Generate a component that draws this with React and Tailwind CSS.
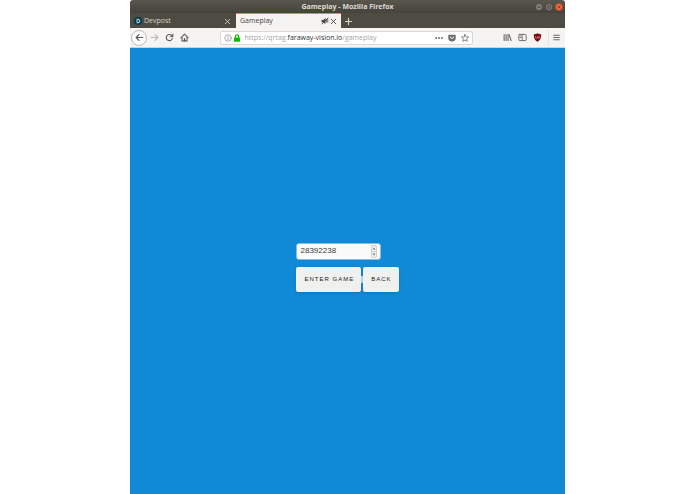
import React, { useState } from "react";

const Icon = ({ className = "h-[9px] w-[9px]", children }) => (
  <svg
    viewBox="0 0 16 16"
    className={className}
    fill="none"
    stroke="currentColor"
    strokeWidth="2"
    strokeLinecap="round"
    strokeLinejoin="round"
    aria-hidden="true"
  >
    {children}
  </svg>
);

const CloseIcon = () => (
  <Icon className="h-[7px] w-[7px]">
    <path d="M3 3l10 10M13 3L3 13" />
  </Icon>
);

const TitleBar = () => (
  <header className="relative flex h-[13px] items-center justify-end gap-[2px] rounded-t-[3px] bg-linear-to-b from-[#59564e] to-[#45433d] pr-[2px]">
    <h1 className="absolute inset-x-0 text-center font-['Open_Sans','Noto_Sans',sans-serif] text-[7px] leading-[13px] font-bold text-[#dfdbd2]">
      Gameplay - Mozilla Firefox
    </h1>
    <button aria-label="Minimize" className="relative text-[#84817a]">
      <svg viewBox="0 0 16 16" className="h-[8px] w-[8px]">
        <circle cx="8" cy="8" r="7" fill="currentColor" stroke="#3a3833" />
        <path d="M5 8h6" stroke="#3a3833" strokeWidth="2" />
      </svg>
    </button>
    <button aria-label="Maximize" className="relative text-[#84817a]">
      <svg viewBox="0 0 16 16" className="h-[8px] w-[8px]">
        <circle cx="8" cy="8" r="7" fill="currentColor" stroke="#3a3833" />
        <path d="M5.5 5.5h5v5h-5z" fill="none" stroke="#3a3833" strokeWidth="1.5" />
      </svg>
    </button>
    <button aria-label="Close" className="relative text-[#ee6436]">
      <svg viewBox="0 0 16 16" className="h-[8px] w-[8px]">
        <circle cx="8" cy="8" r="7.5" fill="currentColor" stroke="#6b3a26" strokeWidth="0.6" />
        <path d="M5.5 5.5l5 5M10.5 5.5l-5 5" stroke="#8a3a1e" strokeWidth="1.6" />
      </svg>
    </button>
  </header>
);

const TabBar = () => (
  <nav className="flex h-[15px] items-stretch bg-[#4e4b43] text-[7px] text-[#d8d4cc]">
    <div className="flex w-[106px] items-center border-t border-transparent pr-[5px] pl-1">
      <svg viewBox="0 0 16 16" className="mr-[2px] h-[8px] w-[8px]" aria-hidden="true">
        <circle cx="8" cy="8" r="8" fill="#003e54" />
        <path d="M6 4.5h2a3.5 3.5 0 0 1 0 7H6z" fill="none" stroke="#d9edf5" strokeWidth="1.8" />
      </svg>
      <a href="#devpost" className="flex-1">
        Devpost
      </a>
      <button aria-label="Close Devpost">
        <CloseIcon />
      </button>
    </div>
    <div className="flex w-[105px] items-center border-t border-[#dd8468] bg-[#f5f3f2] pr-1 pl-1 text-[#45433e]">
      <a href="#gameplay" className="flex-1">
        Gameplay
      </a>
      <button aria-label="Unmute tab" className="mr-px">
        <Icon className="h-[8px] w-[8px]">
          <path d="M2 6.5h2.5L8.500 3v10L4.500 10H2z" fill="currentColor" strokeWidth="1" />
          <path d="M11 6v4M13.5 4.5v6" strokeWidth="1.5" />
          <path d="M2 14L14 2" strokeWidth="1.8" />
        </Icon>
      </button>
      <button aria-label="Close Gameplay">
        <CloseIcon />
      </button>
    </div>
    <button aria-label="New tab" className="border-t border-transparent px-[3px]">
      <Icon>
        <path d="M8 2.5v11M2.5 8h11" />
      </Icon>
    </button>
  </nav>
);

const Toolbar = () => (
  <div className="flex h-5 items-center border-b border-[#cfd2d4] bg-[#f5f4f2] text-[#5b5b5b]">
    <div className="flex flex-1 items-center gap-[6px] pl-px">
      <button
        aria-label="Back"
        className="grid h-4 w-4 place-items-center rounded-full border border-[#bdbbb9] bg-[#fcfcfc]"
      >
        <Icon>
          <path d="M14 8H2.5M7 3L2 8l5 5" />
        </Icon>
      </button>
      <div className="-ml-[3px] flex items-center gap-[6px]">
        <button aria-label="Forward" className="text-[#b9b8b7]">
          <Icon>
            <path d="M2 8h11.500M9 3l5 5-5 5" />
          </Icon>
        </button>
        <button aria-label="Reload">
          <Icon>
            <path d="M13 10a5.500 5.500 0 1 1-1.500-6" />
            <path d="M14.500 1.500v5.500H9z" fill="currentColor" strokeWidth="0.5" />
          </Icon>
        </button>
        <button aria-label="Home">
          <Icon>
            <path d="M1.500 8.500L8 2l6.500 6.500M3.500 8v6h9V8" strokeWidth="1.800" />
            <path d="M8 14v-4" strokeWidth="2.500" />
          </Icon>
        </button>
      </div>
    </div>

    <div className="flex h-[14px] w-[253px] items-center rounded-[2px] border border-[#dad9d8] bg-white px-[3px]">
      <button aria-label="Site information" className="text-[#858585]">
        <Icon className="h-[8px] w-[8px]">
          <circle cx="8" cy="8" r="6.5" strokeWidth="1.3" />
          <path d="M8 7.5v4M8 4.5v.2" strokeWidth="1.6" />
        </Icon>
      </button>
      <svg viewBox="0 0 16 16" className="ml-px h-[8px] w-[8px]" aria-hidden="true">
        <rect x="2" y="7" width="12" height="8.5" rx="1" fill="#12bc00" />
        <path d="M4.8 8V5a3.200 3.200 0 0 1 6.400 0v3" fill="none" stroke="#12bc00" strokeWidth="2.2" />
      </svg>
      <a
        href="#gameplay"
        className="ml-1 flex-1 text-[7px] leading-3 text-[#a5a5a5]"
      >
        https://qrtag.<span className="text-[#333333]">faraway-vision.io</span>/gameplay
      </a>
      <div className="flex items-center gap-[5px] text-[#6d6d6d]">
        <button aria-label="Page actions">
          <svg viewBox="0 0 16 16" className="h-[8px] w-[8px]" fill="currentColor">
            <circle cx="2.2" cy="8" r="2" />
            <circle cx="8" cy="8" r="2" />
            <circle cx="13.8" cy="8" r="2" />
          </svg>
        </button>
        <button aria-label="Save to Pocket">
          <svg viewBox="0 0 16 16" className="h-[8px] w-[8px]">
            <path d="M2 1.500h12a1.500 1.500 0 0 1 1.500 1.500v4.500a7.500 7.500 0 0 1-15 0V3A1.500 1.500 0 0 1 2 1.500z" fill="currentColor" />
            <path d="M4.500 6L8 9.300 11.500 6" fill="none" stroke="white" strokeWidth="2" strokeLinecap="round" />
          </svg>
        </button>
        <button aria-label="Bookmark this page">
          <Icon className="h-[8px] w-[8px]">
            <path d="M8 1l2.100 4.600 4.900.6-3.600 3.400 1 5L8 12.100l-4.400 2.500 1-5L1 6.200l4.900-.6z" strokeWidth="1.700" />
          </Icon>
        </button>
      </div>
    </div>

    <div className="flex flex-1 items-center justify-end gap-[6px] pr-1">
      <button aria-label="Library">
        <Icon>
          <path d="M2 2.500v11M5.500 2.500v11M9 2.500v11M11 3l3.500 10.500" strokeWidth="1.800" />
        </Icon>
      </button>
      <button aria-label="Sidebars">
        <Icon>
          <rect x="1.5" y="2.5" width="13" height="11" rx="1.5" strokeWidth="1.5" />
          <path d="M7.500 3v10M3.500 5.500h2M3.500 8h2" strokeWidth="1.3" />
        </Icon>
      </button>
      <button aria-label="uBlock Origin">
        <svg viewBox="0 0 16 16" className="h-[9px] w-[9px]">
          <path d="M8 .5c2 1.300 4 1.800 6.500 1.800 0 6-.5 9.700-6.500 13.200C2 12 1.500 8.300 1.500 2.300 4 2.300 6 1.800 8 .5z" fill="#800610" />
          <path d="M4.500 6v2a1.500 1.500 0 0 0 3 0V6" fill="none" stroke="#e8b9bc" strokeWidth="1" />
          <circle cx="10.300" cy="7.800" r="1.600" fill="none" stroke="#e8b9bc" strokeWidth="1" />
        </svg>
      </button>
      <div className="flex items-center gap-[3px] border-l border-[#e4e3e1] py-[3px] pl-[3px]">
        <button aria-label="Open menu">
          <Icon>
            <path d="M3 4h10M3 8h10M3 12h10" strokeWidth="1.6" />
          </Icon>
        </button>
      </div>
    </div>
  </div>
);

const GameForm = () => {
  const [code, setCode] = useState("28392238");
  const step = (n) => setCode(String(Number(code) + n));

  return (
    <form
      onSubmit={(e) => e.preventDefault()}
      className="font-['Liberation_Sans',Arial,sans-serif]"
    >
      <div className="flex h-[17px] w-[85px] items-center rounded-[3px] border border-[#8cbbdc] bg-[#fafafa] pr-[3px] pl-[3px]">
        <input
          type="number"
          aria-label="Game code"
          value={code}
          onChange={(e) => setCode(e.target.value)}
          className="min-w-0 flex-1 [appearance:textfield] bg-transparent pb-px text-[8px] leading-3 text-[#3c3c3c] outline-none"
        />
        <div className="flex flex-col rounded-[2px] border border-[#cfcfcf] bg-[#f1f1f0] text-[#777777]">
          <button type="button" aria-label="Increase" onClick={() => step(1)}>
            <svg viewBox="0 0 8 10" className="h-[5px] w-[4px]" fill="currentColor">
              <path d="M4 3l3 4H1z" />
            </svg>
          </button>
          <button
            type="button"
            aria-label="Decrease"
            onClick={() => step(-1)}
            className="border-t border-[#cfcfcf]"
          >
            <svg viewBox="0 0 8 10" className="h-[5px] w-[4px]" fill="currentColor">
              <path d="M4 7l3-4H1z" />
            </svg>
          </button>
        </div>
      </div>

      <div className="mt-[7px] flex items-center text-[6px] tracking-[1px] text-[#222222]">
        <button className="h-[25px] rounded-[2px] bg-[#f0f0ef] pr-[7px] pl-2 shadow-sm">
          ENTER GAME
        </button>
        <span className="h-[7px] w-[2px] bg-[#b5d3ea]" />
        <button type="button" className="h-[25px] rounded-[2px] bg-[#f0f0ef] pr-[7px] pl-2 shadow-sm">
          BACK
        </button>
      </div>
    </form>
  );
};

const App = () => {
  return (
    <div className="min-h-screen bg-white px-[130px]">
      <div className="flex min-h-screen flex-col font-['Open_Sans','Noto_Sans',sans-serif]">
        <TitleBar />
        <TabBar />
        <Toolbar />
        <main className="flex flex-1 items-center justify-center bg-[#1089d6] pb-2">
          <GameForm />
        </main>
      </div>
    </div>
  );
};

export default App;
